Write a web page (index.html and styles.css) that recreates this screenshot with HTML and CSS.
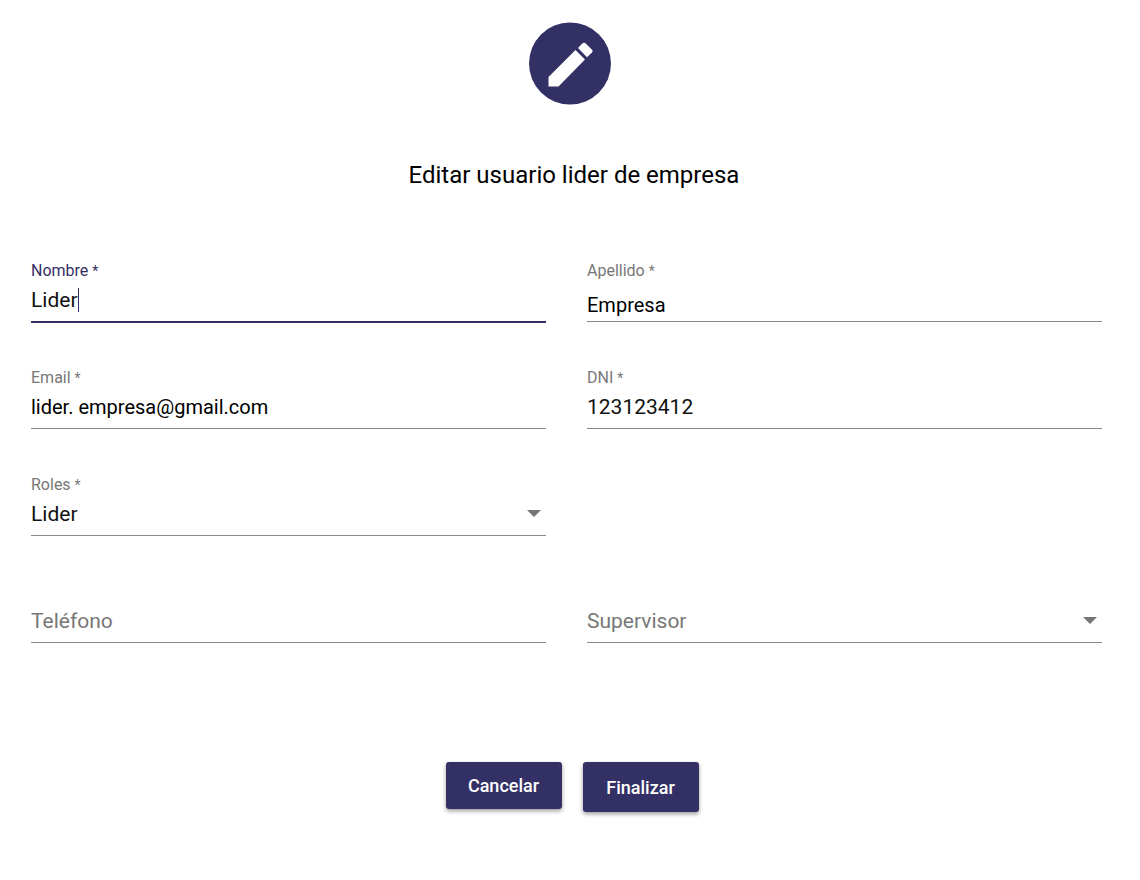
FILE: index.html
```html
<!DOCTYPE html>
<html lang="es">
<head>
<meta charset="utf-8">
<meta name="viewport" content="width=device-width, initial-scale=1">
<title>Editar usuario</title>
<link rel="stylesheet" href="styles.css">
</head>
<body>
<main class="page">
  <svg class="badge" viewBox="0 0 82 82" aria-hidden="true">
    <circle class="badge-disc" cx="41" cy="41" r="41"/>
    <path class="badge-pencil" d="M19.500 54.500 46.500 27.500 56 37 29.500 64H19.500Z"/>
    <path class="badge-pencil" d="M49 25.500 53.500 20.800Q55 19.500 56.500 20.800L63 27.200Q64.500 28.500 63 30L58 34.800Z"/>
  </svg>
  <h1 class="title">Editar usuario lider de empresa</h1>
  <form class="form">
    <div class="fields">
      <div class="field field-active">
        <label class="label" for="nombre">Nombre <span class="mark">*</span></label>
        <div class="control">
          <input class="value value-fit" id="nombre" type="text" value="Lider" required>
          <span class="caret"></span>
        </div>
      </div>
      <div class="field">
        <label class="label" for="apellido">Apellido <span class="mark">*</span></label>
        <div class="control control-low">
          <input class="value value-light" id="apellido" type="text" value="Empresa" required>
        </div>
      </div>
      <div class="field">
        <label class="label" for="email">Email <span class="mark">*</span></label>
        <div class="control">
          <input class="value value-light" id="email" type="text" inputmode="email" value="lider. empresa@gmail.com" required>
        </div>
      </div>
      <div class="field">
        <label class="label" for="dni">DNI <span class="mark">*</span></label>
        <div class="control">
          <input class="value" id="dni" type="text" inputmode="numeric" value="123123412" required>
        </div>
      </div>
      <div class="field">
        <label class="label" for="roles">Roles <span class="mark">*</span></label>
        <div class="control">
          <select class="value" id="roles" required><option>Lider</option></select>
          <svg class="arrow" viewBox="0 0 14 7" aria-hidden="true"><path d="M0 0H14L7 7Z"/></svg>
        </div>
      </div>
      <div class="field field-unlabelled field-new-row">
        <div class="control">
          <input class="value" type="tel" aria-label="Teléfono" placeholder="Teléfono">
        </div>
      </div>
      <div class="field field-unlabelled">
        <div class="control">
          <select class="value value-empty" aria-label="Supervisor"><option>Supervisor</option></select>
          <svg class="arrow" viewBox="0 0 14 7" aria-hidden="true"><path d="M0 0H14L7 7Z"/></svg>
        </div>
      </div>
    </div>
    <div class="actions">
      <button class="button" type="button">Cancelar</button>
      <button class="button button-tall" type="submit">Finalizar</button>
    </div>
  </form>
</main>
</body>
</html>
```
FILE: styles.css
```css
* {
  box-sizing: border-box;
}

body {
  margin: 0;
  background: #fff;
  color: #111;
  font-family: Roboto, "Liberation Sans", sans-serif;
}

.page {
  display: flex;
  flex-direction: column;
  align-items: center;
  padding: 22px 0 40px;
}

.badge {
  width: 82px;
  height: 83px;
}

.badge-disc {
  fill: #333065;
}

.badge-pencil {
  fill: #fff;
}

.title {
  margin: 54px 0 69px;
  padding-left: 8px;
  color: #000;
  font-size: 24px;
  font-weight: 400;
  line-height: 32px;
}

.form {
  width: 100%;
}

.fields {
  display: grid;
  grid-template-columns: 1fr 1fr;
  gap: 45px 41px;
  padding: 0 38px 0 31px;
}

.field {
  min-width: 0;
}

.field-unlabelled {
  padding-top: 21px;
}

.field-new-row {
  grid-column-start: 1;
}

.label {
  display: block;
  color: #777;
  font-size: 16px;
  line-height: 21px;
}

.mark {
  font-size: 14px;
  line-height: 1;
}

.control {
  display: flex;
  align-items: center;
  height: 41px;
  padding-bottom: 3px;
  border-bottom: 1px solid #8a8a8a;
}

.control-low {
  padding-top: 9px;
  padding-bottom: 1px;
}

.field-active .label {
  color: #333065;
}

.field-active .control {
  height: 42px;
  margin-bottom: -1px;
  border-bottom: 2px solid #333065;
}

.value {
  flex: 1;
  min-width: 0;
  height: 30px;
  margin: 0;
  padding: 0;
  border: 0;
  outline: 0;
  background: transparent;
  color: #111;
  appearance: none;
  font-family: inherit;
  font-size: 21px;
  line-height: 30px;
}

.value-fit {
  flex: none;
  field-sizing: content;
}

.value-light {
  color: #000;
  font-size: 20px;
}

.value-empty,
.value::placeholder {
  color: #777;
  opacity: 1;
}

.caret {
  width: 1px;
  height: 24px;
  background: #333065;
}

.arrow {
  width: 14px;
  height: 7px;
  margin-right: 5px;
  fill: #757575;
}

.actions {
  display: flex;
  justify-content: center;
  align-items: flex-start;
  gap: 21px;
  margin-top: 119px;
  padding-left: 4px;
}

.button {
  width: 116px;
  height: 47px;
  padding: 0;
  border: 0;
  border-radius: 3px;
  background: #333065;
  box-shadow: 0 2px 4px rgba(0, 0, 0, 0.4);
  color: #fff;
  font-family: inherit;
  font-size: 18px;
  font-weight: 500;
  line-height: 24px;
}

.button-tall {
  height: 50px;
  padding-top: 2px;
}
```
